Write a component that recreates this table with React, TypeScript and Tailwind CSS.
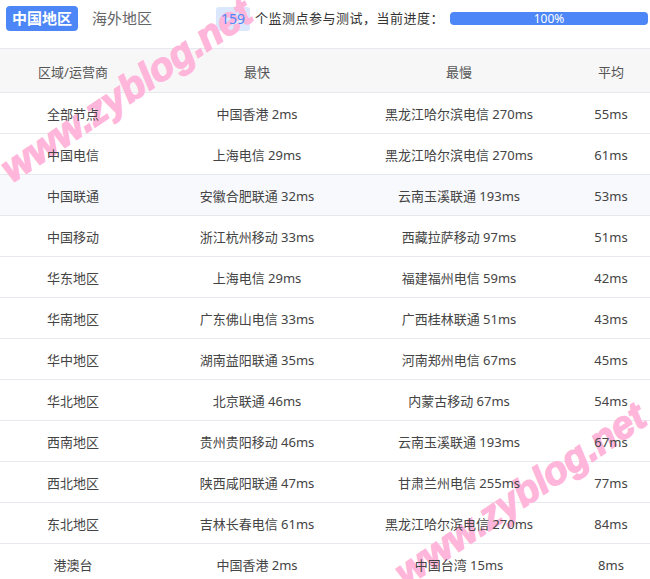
import React from "react"

const rows = [
  ["全部节点", "中国香港 2ms", "黑龙江哈尔滨电信 270ms", "55ms"],
  ["中国电信", "上海电信 29ms", "黑龙江哈尔滨电信 270ms", "61ms"],
  ["中国联通", "安徽合肥联通 32ms", "云南玉溪联通 193ms", "53ms"],
  ["中国移动", "浙江杭州移动 33ms", "西藏拉萨移动 97ms", "51ms"],
  ["华东地区", "上海电信 29ms", "福建福州电信 59ms", "42ms"],
  ["华南地区", "广东佛山电信 33ms", "广西桂林联通 51ms", "43ms"],
  ["华中地区", "湖南益阳联通 35ms", "河南郑州电信 67ms", "45ms"],
  ["华北地区", "北京联通 46ms", "内蒙古移动 67ms", "54ms"],
  ["西南地区", "贵州贵阳移动 46ms", "云南玉溪联通 193ms", "67ms"],
  ["西北地区", "陕西咸阳联通 47ms", "甘肃兰州电信 255ms", "77ms"],
  ["东北地区", "吉林长春电信 61ms", "黑龙江哈尔滨电信 270ms", "84ms"],
  ["港澳台", "中国香港 2ms", "中国台湾 15ms", "8ms"],
]

const cols = "grid grid-cols-[146px_222px_182px_122px]"

// pink site watermark, sits above backgrounds but below the text
function Watermark({ pos }: { pos: string }) {
  return (
    <div
      className={`absolute z-[5] ${pos} -translate-x-1/2 -translate-y-1/2 -rotate-[34deg] whitespace-nowrap pointer-events-none text-[39px] font-bold italic text-[#ffb6da] leading-none [-webkit-text-stroke:1.5px_#ffb6da]`}
      style={{ fontFamily: '"Liberation Sans", sans-serif' }}
    >
      www.zyblog.net
    </div>
  )
}

export default function App() {
  return (
    <div
      className="relative w-[650px] h-[579px] overflow-hidden bg-white text-[#444]"
      style={{ fontFamily: '"Noto Sans", "Noto Sans CJK SC", sans-serif' }}
    >
      {/* top bar */}
      <div className="flex items-center h-[25px] mt-[6px] pl-[6px]">
        <div className="relative z-10 h-[25px] px-[6px] rounded-[4px] bg-[#4d87f7] text-white text-[15px] font-bold flex items-center">
          中国地区
        </div>
        <div className="relative z-10 ml-[14px] text-[15px] text-[#666]">海外地区</div>
        <div className="ml-[64px] h-[24px] w-[34px] rounded-[3px] bg-[#dbe7fd] text-[#4d87f7] text-[14px] flex items-center justify-center">
          <span className="relative z-10">159</span>
        </div>
        <div className="relative z-10 ml-[5px] text-[13px] text-[#333] tracking-[0.5px]">个监测点参与测试，当前进度：</div>
        <div className="relative z-10 ml-[6px] w-[198px] h-[13px] rounded-[4px] bg-[#4d87f7] text-white text-[12px] leading-[13px] text-center">
          100%
        </div>
      </div>

      {/* table */}
      <div className="mt-[17px] text-[13px]">
        <div className={`${cols} h-[45px] pt-[4px] items-center bg-[#f7f7f8] border-y border-[#e6e9ee] text-[#555]`}>
          <div className="relative z-10 text-center">区域/运营商</div>
          <div className="relative z-10 text-center">最快</div>
          <div className="relative z-10 text-center">最慢</div>
          <div className="relative z-10 text-center">平均</div>
        </div>
        {rows.map((r, i) => (
          <div
            key={i}
            className={`${cols} h-[41px] pt-[4px] items-center border-b border-[#e6e9ee] ${i === 2 ? "bg-[#f8f9fd]" : ""}`}
          >
            {r.map((c, j) => (
              <div key={j} className="relative z-10 text-center whitespace-nowrap">
                {c}
              </div>
            ))}
          </div>
        ))}
      </div>

      {/* watermarks */}
      <Watermark pos="left-[126px] top-[90px]" />
      <Watermark pos="left-[520px] top-[494px]" />
    </div>
  )
}
